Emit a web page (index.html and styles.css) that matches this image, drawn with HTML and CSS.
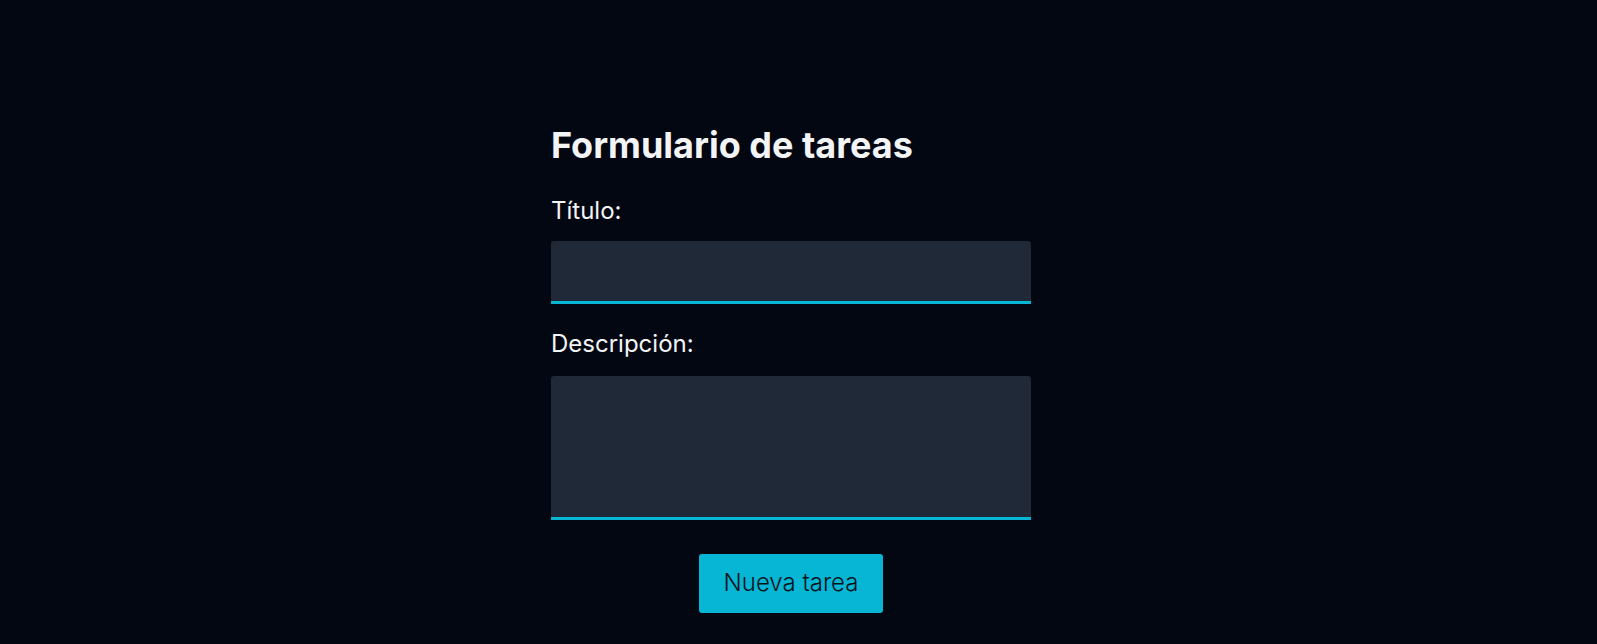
FILE: index.html
```html
<!DOCTYPE html>
<html lang="es">
<head>
<meta charset="utf-8">
<title>Formulario de tareas</title>
<link rel="stylesheet" href="styles.css">
</head>
<body>
<main class="page">
  <form class="task-form">
    <h1 class="form-title">Formulario de tareas</h1>
    <label class="field-label" for="titulo">Título:</label>
    <input class="field-input" id="titulo" type="text">
    <label class="field-label field-label--second" for="descripcion">Descripción:</label>
    <textarea class="field-textarea" id="descripcion"></textarea>
    <div class="actions">
      <button class="btn" type="button">Nueva tarea</button>
    </div>
  </form>
</main>
</body>
</html>
```

FILE: styles.css
```css
* { box-sizing: border-box; }
html, body {
  margin: 0;
  padding: 0;
  background: #030712;
  height: 100%;
}
body {
  font-family: Inter, "Noto Sans", sans-serif;
  color: #f3f4f6;
  padding-right: 15px;
}
.page {
  display: flex;
  justify-content: center;
  padding-top: 125px;
}
.task-form {
  width: 480px;
  display: flex;
  flex-direction: column;
}
.form-title {
  margin: 0;
  font-size: 36px;
  line-height: 40px;
  font-weight: 700;
  color: #f3f4f6;
}
.field-label {
  font-size: 24px;
  line-height: 32px;
  margin-top: 30px;
  margin-bottom: 14px;
}
.field-label--second {
  margin-top: 24px;
  margin-bottom: 16px;
}
.field-input,
.field-textarea {
  display: block;
  width: 100%;
  background: #1f2937;
  border: none;
  border-bottom: 3px solid #06b6d4;
  border-radius: 3px 3px 0 0;
  color: #f3f4f6;
  font-family: inherit;
  font-size: 24px;
  padding: 8px 12px;
  outline: none;
  margin: 0;
}
.field-input { height: 63px; }
.field-textarea { height: 144px; resize: none; }
.actions {
  display: flex;
  justify-content: center;
  margin-top: 34px;
}
.btn {
  background: #06b6d4;
  color: #08131c;
  border: none;
  border-radius: 3px;
  font-family: inherit;
  font-size: 24px;
  line-height: 32px;
  font-weight: 300;
  white-space: nowrap;
  padding: 13px 0 14px;
  width: 184px;
  text-align: center;
  cursor: pointer;
}
```
